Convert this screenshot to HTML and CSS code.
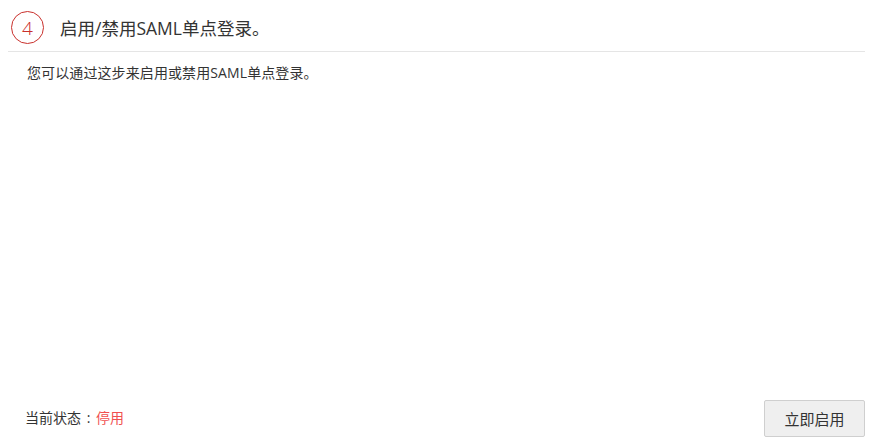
FILE: index.html
```html
<!DOCTYPE html>
<html lang="zh-CN">
<head>
<meta charset="utf-8">
<title>启用/禁用SAML单点登录</title>
<link rel="stylesheet" href="styles.css">
</head>
<body>
<div class="panel">
  <div class="step-header">
    <span class="step-num">4</span>
    <h2 class="step-title">启用/禁用SAML单点登录。</h2>
  </div>
  <div class="step-body">
    <p class="desc">您可以通过这步来启用或禁用SAML单点登录。</p>
  </div>
  <div class="step-footer">
    <div class="status">当前状态<span class="sep"> : </span><span class="status-off">停用</span></div>
    <button class="btn" type="button">立即启用</button>
  </div>
</div>
</body>
</html>
```
FILE: styles.css
```css
html, body {
  margin: 0;
  padding: 0;
  background: #fff;
}
body {
  font-family: "Open Sans", "Noto Sans CJK SC", sans-serif;
  color: #333;
  height: 445px;
}
.panel {
  margin: 0 9px 0 8px;
  height: 445px;
  display: flex;
  flex-direction: column;
}
.step-header {
  display: flex;
  align-items: center;
  gap: 16px;
  padding: 11px 0 7px 3px;
  border-bottom: 1px solid #e5e5e5;
}
.step-num {
  box-sizing: border-box;
  width: 33px;
  height: 33px;
  border: 1px solid #c9302c;
  border-radius: 50%;
  color: #c9302c;
  display: flex;
  align-items: center;
  justify-content: center;
  font-size: 19px;
  font-weight: 300;
}
.step-title {
  margin: 0;
  font-size: 17.5px;
  font-weight: 400;
  color: #333;
}
.step-body {
  flex: 1;
  padding: 10px 0 0 19px;
}
.desc {
  margin: 0;
  font-size: 14px;
  letter-spacing: 0.1px;
  color: #333;
}
.step-footer {
  display: flex;
  align-items: center;
  justify-content: space-between;
  padding: 0 0 8px 17px;
}
.status {
  font-size: 14px;
  color: #333;
  margin-top: -3px;
}
.sep {
  word-spacing: 2px;
}
.status-off {
  color: #f05050;
}
.btn {
  box-sizing: border-box;
  width: 101px;
  height: 37px;
  background: #efefef;
  border: 1px solid #cfcfcf;
  border-radius: 2px;
  font-family: "Open Sans", "Noto Sans CJK SC", sans-serif;
  font-size: 15px;
  color: #333;
  padding: 0;
}
```
